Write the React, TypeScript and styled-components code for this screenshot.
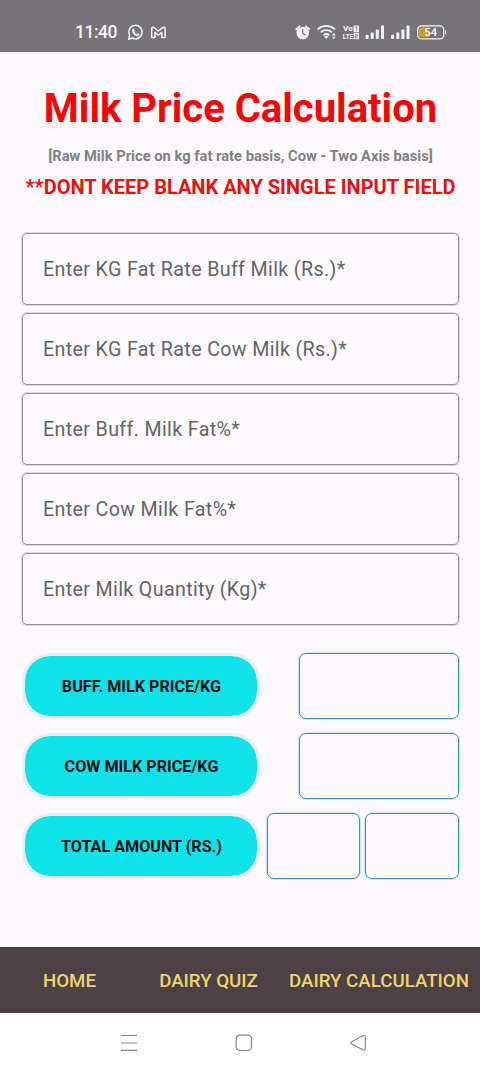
import React from "react";
import styled, { createGlobalStyle } from "styled-components";

const GlobalStyle = createGlobalStyle`
  * { box-sizing: border-box; }
  body { margin: 0; background: #fcfafd; font-family: Roboto, sans-serif; }
`;

const Screen = styled.div`
  width: 480px;
  height: 1072px;
  display: flex;
  flex-direction: column;
  background: #fcfafd;
  overflow: hidden;
`;

const StatusBar = styled.header`
  height: 52px;
  flex: none;
  padding: 12px 34px 0 75px;
  display: flex;
  align-items: flex-start;
  justify-content: space-between;
  background: #767477;
  color: #f4f3f5;
`;

const StatusGroup = styled.div`
  display: flex;
  align-items: center;
  height: 40px;
  svg { display: block; flex: none; }
`;

const Clock = styled.span`
  width: 52px;
  font-size: 17.5px;
  line-height: 20px;
  font-weight: 500;
  letter-spacing: -0.5px;
  white-space: nowrap;
`;

const Content = styled.main`
  flex: 1;
  padding: 33px 21px 0 22px;
`;

const Title = styled.h1`
  margin: 0;
  text-align: center;
  font-size: 40px;
  line-height: 47px;
  font-weight: 700;
  color: #fb0204;
  white-space: nowrap;
`;

const Subtitle = styled.p`
  margin: 15px 0 0;
  text-align: center;
  font-size: 14.72px;
  line-height: 18px;
  font-weight: 700;
  color: #828083;
  white-space: nowrap;
`;

const Warning = styled.p`
  margin: 11px -10px 0;
  text-align: center;
  font-size: 20px;
  line-height: 22px;
  font-weight: 700;
  color: #ea1010;
  white-space: nowrap;
`;

const Fields = styled.div`
  display: grid;
  gap: 8px;
  margin-top: 35px;
`;

const Field = styled.div`
  height: 72px;
  padding-left: 20px;
  display: flex;
  align-items: center;
  border: 1px solid #939195;
  border-radius: 5px;
  box-shadow: 0 0 0 1px rgba(145, 143, 147, 0.3);
  font-size: 19.65px;
  letter-spacing: 0.36px;
  color: #656367;
  white-space: nowrap;
`;

const Results = styled.div`
  display: grid;
  gap: 14px;
  margin-top: 28px;
`;

const ResultRow = styled.div`
  display: flex;
  height: 66px;
  justify-content: space-between;
`;

const PriceButton = styled.button`
  width: 238px;
  height: 66px;
  padding: 2px 0 0 1px;
  border: 3px solid #ededef;
  border-radius: 28px;
  background: #10e2e9;
  background-clip: padding-box;
  font: 700 16.15px/20px Roboto, sans-serif;
  color: #08110f;
`;

const Outputs = styled.div`
  display: flex;
  gap: 5px;
`;

const Output = styled.output<{ $width: number }>`
  width: ${(p) => p.$width}px;
  height: 66px;
  border: 1px solid #3a8fb7;
  border-radius: 7px;
  box-shadow: 0 0 0 1px rgba(58, 143, 183, 0.22);
`;

const TabBar = styled.nav`
  height: 66px;
  flex: none;
  display: grid;
  grid-template-columns: 139px 139px 202px;
  align-items: center;
  padding-top: 2px;
  background: #4c4246;
`;

const Tab = styled.a`
  text-align: center;
  font-size: 18.7px;
  line-height: 22px;
  font-weight: 500;
  color: #eed469;
  white-space: nowrap;
`;

const SystemBar = styled.footer`
  height: 59px;
  flex: none;
  display: flex;
  justify-content: space-between;
  align-items: center;
  padding: 0 113px 0 120px;
  background: #fefefe;
  svg { display: block; }
`;

const fields = [
  "Enter KG Fat Rate Buff Milk (Rs.)*",
  "Enter KG Fat Rate Cow Milk (Rs.)*",
  "Enter Buff. Milk Fat%*",
  "Enter Cow Milk Fat%*",
  "Enter Milk Quantity (Kg)*",
];

const results = [
  { label: "BUFF. MILK PRICE/KG", outputs: [160] },
  { label: "COW MILK PRICE/KG", outputs: [160] },
  { label: "TOTAL AMOUNT (RS.)", outputs: [93, 94] },
];

const AppIcons = () => (
  <svg width="42" height="20" viewBox="127 22 42 20" fill="none" stroke="#f4f3f5">
    <path d="M128.6 39.2l1-3.8a6.7 6.7 0 1 1 2.7 2.6z" strokeWidth="1.5" strokeLinejoin="round" />
    <path d="M132.7 29.3c.7-.8 1.4-.5 1.7.3l.4 1c.1.4-.5.9-.7 1.2.6 1.1 1.5 1.9 2.7 2.4.4-.3.8-1.1 1.2-.9l1.4.7c.6.3-.2 1.7-.9 2-2.8 1-6.7-3.1-6.4-5.3.1-.6.3-1.1.6-1.4z" fill="#f4f3f5" stroke="none" />
    <path d="M151.7 37.6v-9c0-1.4 1.4-1.7 2.4-1l4.3 3.4 4.3-3.4c1-.7 2.4-.4 2.4 1v9h-3.3v-5.2l-3.4 2.7-3.4-2.7v5.2z" strokeWidth="1.5" strokeLinejoin="round" />
  </svg>
);

const DeviceIcons = () => (
  <svg width="152" height="20" viewBox="294 22 152 20" fill="none" stroke="#f4f3f5">
    <circle cx="302.8" cy="33" r="6.3" fill="#f4f3f5" stroke="none" />
    <path d="M296.2 29.2l3.4-2.8M306 26.4l3.4 2.8" strokeWidth="1.8" strokeLinecap="round" />
    <path d="M302.8 29.2v4.1l2.6 1.6" stroke="#767477" strokeWidth="1.2" />
    <path d="M317.7 29.3c5-4.5 12.2-4.5 17.2 0M320.6 32.4c3.4-3 8-3 11.4 0M323.3 35.3c1.8-1.5 4.2-1.5 6 0" strokeWidth="1.8" />
    <path d="M324.1 36.5c1.3-.9 3.1-.9 4.4 0l-2.2 2.5z" fill="#f4f3f5" stroke="none" />
    <path d="M333.8 33.1l1.9 2.3h-3.8zM333.8 39l1.9-2.3h-3.8z" fill="#f4f3f5" stroke="none" />
    <g fill="#f4f3f5" stroke="none" fontFamily="Roboto, sans-serif" fontWeight="700" fontSize="8">
      <text x="343" y="31.3" textLength="9.8" lengthAdjust="spacingAndGlyphs">Vo</text>
      <text x="342.8" y="39.2" textLength="10.2" lengthAdjust="spacingAndGlyphs">LTE</text>
      <rect x="353.6" y="25.4" width="5.4" height="6.5" rx=".6" />
      <rect x="353.6" y="32.8" width="5.4" height="6.5" rx=".6" />
    </g>
    <path d="M355.5 27.3l1.1-.6v4.1M355.1 34.5h2.3v1.5h-2.1v1.7h2.4" stroke="#767477" strokeWidth=".9" />
    <g fill="#f4f3f5" stroke="none">
      <rect x="365.6" y="34.7" width="3" height="4.3" rx=".8" />
      <rect x="370.7" y="32.6" width="3" height="6.4" rx=".8" />
      <rect x="375.8" y="29.5" width="3" height="9.5" rx=".8" />
      <rect x="381" y="25.6" width="3" height="13.4" rx=".8" />
      <rect x="391.1" y="34.7" width="3" height="4.3" rx=".8" />
      <rect x="396.3" y="32.6" width="3" height="6.4" rx=".8" />
      <rect x="401.4" y="29.5" width="3" height="9.5" rx=".8" />
      <rect x="406.5" y="25.6" width="3" height="13.4" rx=".8" />
      <rect x="445" y="30.2" width="1.3" height="4.2" rx=".6" />
    </g>
    <path d="M421 27.3h8.2v10.3h-8.2a2 2 0 0 1-2-2v-6.3a2 2 0 0 1 2-2z" fill="#c99c32" stroke="none" />
    <rect x="417.7" y="25.9" width="26" height="13" rx="4" strokeWidth="1.3" />
    <text x="430.8" y="36.4" textAnchor="middle" fill="#f4f3f5" stroke="none" fontFamily="Roboto, sans-serif" fontSize="11" fontWeight="500">54</text>
  </svg>
);

export default function App() {
  return (
    <>
      <GlobalStyle />
      <Screen>
        <StatusBar>
          <StatusGroup>
            <Clock>11:40</Clock>
            <AppIcons />
          </StatusGroup>
          <StatusGroup>
            <DeviceIcons />
          </StatusGroup>
        </StatusBar>
        <Content>
          <Title>Milk Price Calculation</Title>
          <Subtitle>[Raw Milk Price on kg fat rate basis, Cow - Two Axis basis]</Subtitle>
          <Warning>**DONT KEEP BLANK ANY SINGLE INPUT FIELD</Warning>
          <Fields>
            {fields.map((label) => (
              <Field key={label}>{label}</Field>
            ))}
          </Fields>
          <Results>
            {results.map((row) => (
              <ResultRow key={row.label}>
                <PriceButton>{row.label}</PriceButton>
                <Outputs>
                  {row.outputs.map((width) => (
                    <Output key={width} $width={width} />
                  ))}
                </Outputs>
              </ResultRow>
            ))}
          </Results>
        </Content>
        <TabBar>
          <Tab>HOME</Tab>
          <Tab>DAIRY QUIZ</Tab>
          <Tab>DAIRY CALCULATION</Tab>
        </TabBar>
        <SystemBar>
          <svg width="18" height="18" viewBox="0 0 18 18" stroke="#858487" strokeWidth="1.2">
            <path d="M1 1.5h16M1 9h16M1 16.3h16" />
          </svg>
          <svg width="18" height="18" viewBox="0 0 18 18" fill="none" stroke="#858487" strokeWidth="1.2">
            <rect x="1.2" y="1.2" width="15.3" height="15.3" rx="3.6" />
          </svg>
          <svg width="18" height="18" viewBox="0 0 18 18" fill="none" stroke="#858487" strokeWidth="1.1" strokeLinejoin="round">
            <path d="M2 8.2L14.2 1.6Q16.3.8 16.3 2.8V14.8Q16.3 16.8 14.2 15.9L2 9.5Q1.1 8.9 2 8.2z" />
          </svg>
        </SystemBar>
      </Screen>
    </>
  );
}
